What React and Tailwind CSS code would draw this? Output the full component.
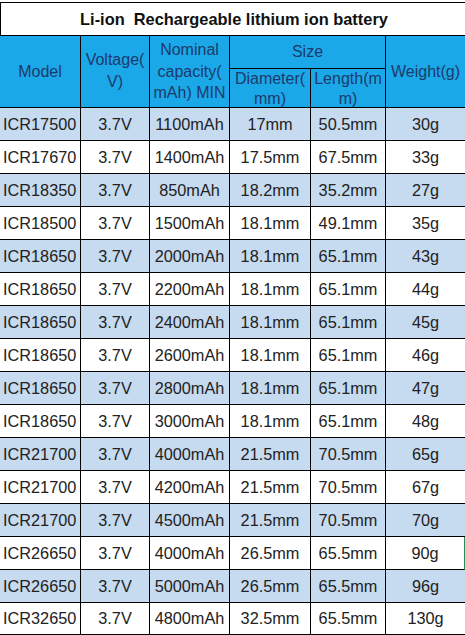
import React from "react";

const rows = [
  ["ICR17500", "3.7V", "1100mAh", "17mm", "50.5mm", "30g"],
  ["ICR17670", "3.7V", "1400mAh", "17.5mm", "67.5mm", "33g"],
  ["ICR18350", "3.7V", "850mAh", "18.2mm", "35.2mm", "27g"],
  ["ICR18500", "3.7V", "1500mAh", "18.1mm", "49.1mm", "35g"],
  ["ICR18650", "3.7V", "2000mAh", "18.1mm", "65.1mm", "43g"],
  ["ICR18650", "3.7V", "2200mAh", "18.1mm", "65.1mm", "44g"],
  ["ICR18650", "3.7V", "2400mAh", "18.1mm", "65.1mm", "45g"],
  ["ICR18650", "3.7V", "2600mAh", "18.1mm", "65.1mm", "46g"],
  ["ICR18650", "3.7V", "2800mAh", "18.1mm", "65.1mm", "47g"],
  ["ICR18650", "3.7V", "3000mAh", "18.1mm", "65.1mm", "48g"],
  ["ICR21700", "3.7V", "4000mAh", "21.5mm", "70.5mm", "65g"],
  ["ICR21700", "3.7V", "4200mAh", "21.5mm", "70.5mm", "67g"],
  ["ICR21700", "3.7V", "4500mAh", "21.5mm", "70.5mm", "70g"],
  ["ICR26650", "3.7V", "4000mAh", "26.5mm", "65.5mm", "90g"],
  ["ICR26650", "3.7V", "5000mAh", "26.5mm", "65.5mm", "96g"],
  ["ICR32650", "3.7V", "4800mAh", "32.5mm", "65.5mm", "130g"],
];

const cols = "grid grid-cols-[81px_69px_80px_81px_75px_79px]";

export default function App() {
  return (
    <div
      className="w-[465px] h-[635px] overflow-hidden bg-white pt-[2px]"
      style={{ fontFamily: '"Liberation Sans", Arial, sans-serif' }}
    >
      <div className="h-[34px] border-t border-b border-l border-black flex items-center justify-center text-[16.4px] font-bold text-[#111] whitespace-pre pl-[2px]">
        {"Li-ion  Rechargeable lithium ion battery"}
      </div>
      <div className={`${cols} grid-rows-[33px_39px] bg-[#1aa8e8] text-[#1d3a6c] text-[16px]`}>
        <div className="row-span-2 border-r border-b border-black flex items-center justify-center">
          Model
        </div>
        <div className="row-span-2 border-r border-b border-black flex flex-col items-center justify-center leading-[22px] pb-[1px]">
          <span>Voltage(</span>
          <span>V)</span>
        </div>
        <div className="row-span-2 border-r border-b border-black flex flex-col items-center justify-center leading-[21.5px]">
          <span>Nominal</span>
          <span>capacity(</span>
          <span>mAh) MIN</span>
        </div>
        <div className="col-span-2 border-r border-b border-black flex items-center justify-center">
          Size
        </div>
        <div className="row-span-2 border-b border-black flex items-center justify-center">
          Weight(g)
        </div>
        <div className="border-r border-b border-black flex flex-col items-center overflow-hidden leading-[20px] pt-0">
          <span>Diameter(</span>
          <span>mm)</span>
        </div>
        <div className="border-r border-b border-black flex flex-col items-center overflow-hidden leading-[20px] pt-0">
          <span>Length(m</span>
          <span>m)</span>
        </div>
      </div>
      {rows.map((r, i) => (
        <div
          key={i}
          className={`${cols} ${i === rows.length - 1 ? "h-[32px]" : "h-[33px]"} ${
            i % 2 === 0 ? "bg-[#c6daf0]" : "bg-white"
          } text-[16.3px] text-[#222]`}
        >
          <div className="border-r border-b border-black flex items-center pl-[3px] whitespace-nowrap">
            {r[0]}
          </div>
          <div className="border-r border-b border-black flex items-center justify-center">{r[1]}</div>
          <div className="border-r border-b border-black flex items-center justify-center">{r[2]}</div>
          <div className="border-r border-b border-black flex items-center justify-center">{r[3]}</div>
          <div className="border-r border-b border-black flex items-center justify-center">{r[4]}</div>
          <div
            className={`border-b border-black flex items-center justify-center ${
              i === 13 ? "border-r border-r-[#2e8b57]" : ""
            }`}
          >
            {r[5]}
          </div>
        </div>
      ))}
    </div>
  );
}
